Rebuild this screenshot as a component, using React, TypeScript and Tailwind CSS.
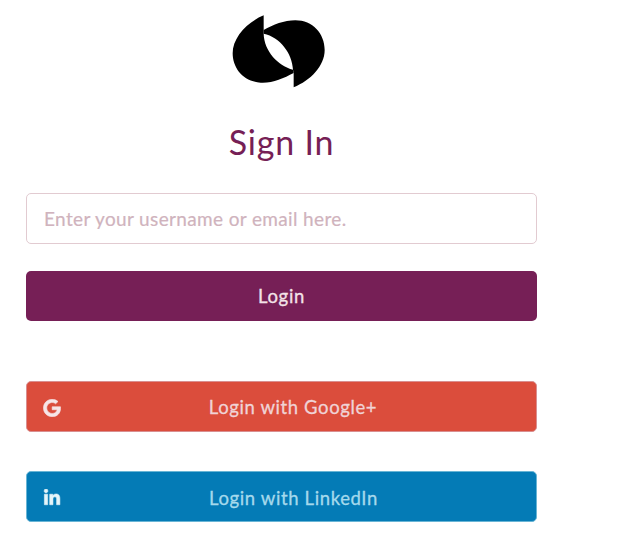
import React from "react";
import { FaGoogle, FaLinkedinIn } from "react-icons/fa";

function Logo() {
  return (
    <svg className="block h-[90px] w-[120px]" viewBox="0 0 360 270" aria-hidden="true">
      <path d="M131 31C80 52 38 98 38 145C38 190 70 230 122 233C157 235 190 220 221 204L219 194C175 183 132 138 131 86Z" />
      <path d="M221 247C272 226 314 183 314 135C314 86 278 46 226 46C192 46 160 59 131 75L131 86C180 96 217 145 219 194L221 204Z" />
    </svg>
  );
}

export default function App() {
  return (
    <main className="flex h-[539px] w-[623px] flex-col overflow-hidden bg-white pl-[26px] pt-[5px] font-['Lato',sans-serif]">
      <div className="flex w-[511px] flex-col">
        <div className="flex justify-center pr-[3px]">
          <Logo />
        </div>
        <h1 className="mt-[27px] h-[41px] text-center text-[34px] leading-[40px] tracking-[0.8px] text-[#761f56]">
          Sign In
        </h1>
        <input
          type="text"
          placeholder="Enter your username or email here."
          className="mt-[30px] h-[51px] w-full rounded-[5px] border border-[#e2cbd1] bg-white px-[17px] text-[19px] tracking-[0.36px] outline-none [-webkit-text-stroke:0.2px] placeholder:text-[#d0b3bd] placeholder:opacity-100"
        />
        <button className="mt-[27px] h-[50px] rounded-[5px] bg-[#761f56] pt-[2px] text-[18.5px] tracking-[0.7px] text-[#f3e2e8] [-webkit-text-stroke:0.3px]">
          Login
        </button>
        <button className="mt-[60px] flex h-[51px] items-center rounded-[5px] border border-[#d98f90] bg-[#db4d3c] px-[16px] text-[18.5px] tracking-[0.6px] text-[#f0d3d6] [-webkit-text-stroke:0.3px]">
          <FaGoogle className="mt-[2px] size-[18px] text-[#f6e5e7]" stroke="currentColor" strokeWidth={16} />
          <span className="flex-1 pl-[5px] pt-[3px] text-center">Login with Google+</span>
        </button>
        <button className="mt-[39px] flex h-[51px] items-center rounded-[5px] border border-[#69b5d5] bg-[#047bb6] px-[16px] text-[18.5px] tracking-[0.62px] text-[#a5d9ec] [-webkit-text-stroke:0.3px]">
          <FaLinkedinIn className="mt-[3px] size-[18px] text-[#e5f5fa]" stroke="currentColor" strokeWidth={16} />
          <span className="flex-1 pl-[6px] pt-[5px] text-center">Login with LinkedIn</span>
        </button>
      </div>
    </main>
  );
}
